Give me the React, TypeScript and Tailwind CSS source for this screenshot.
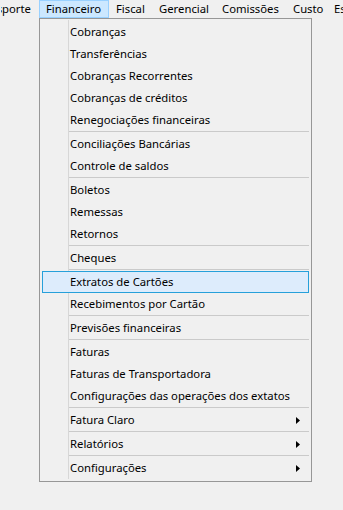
import React from 'react';

type Entry = { label: string; sub?: boolean; active?: boolean } | 'sep';

const entries: Entry[] = [
  { label: 'Cobranças' },
  { label: 'Transferências' },
  { label: 'Cobranças Recorrentes' },
  { label: 'Cobranças de créditos' },
  { label: 'Renegociações financeiras' },
  'sep',
  { label: 'Conciliações Bancárias' },
  { label: 'Controle de saldos' },
  'sep',
  { label: 'Boletos' },
  { label: 'Remessas' },
  { label: 'Retornos' },
  'sep',
  { label: 'Cheques' },
  'sep',
  { label: 'Extratos de Cartões', active: true },
  { label: 'Recebimentos por Cartão' },
  'sep',
  { label: 'Previsões financeiras' },
  'sep',
  { label: 'Faturas' },
  { label: 'Faturas de Transportadora' },
  { label: 'Configurações das operações dos extatos' },
  'sep',
  { label: 'Fatura Claro', sub: true },
  'sep',
  { label: 'Relatórios', sub: true },
  'sep',
  { label: 'Configurações', sub: true },
];

const font = { fontFamily: '"Noto Sans", "Open Sans", sans-serif' };

const App: React.FC = () => {
  return (
    <div className="relative w-[343px] h-[510px] bg-[#f0f0f0] text-[11.3px] text-black overflow-hidden" style={font}>
      {/* menu bar */}
      <div className="flex h-[18px] items-stretch whitespace-nowrap leading-[16px] overflow-hidden">
        <div className="w-[39px] shrink-0 flex justify-end overflow-hidden pr-[7px] border border-transparent">Transporte</div>
        <div className="w-[70px] shrink-0 pl-[6px] bg-[#cce8ff] border border-[#99d1ff]">Financeiro</div>
        <div className="w-[43px] shrink-0 pl-[6px] border border-transparent">Fiscal</div>
        <div className="w-[63px] shrink-0 pl-[6px] border border-transparent">Gerencial</div>
        <div className="w-[71px] shrink-0 pl-[6px] border border-transparent">Comissões</div>
        <div className="w-[41px] shrink-0 pl-[6px] border border-transparent">Custo</div>
        <div className="shrink-0 pl-[6px] border border-transparent">Estoque</div>
      </div>

      {/* dropdown */}
      <div className="absolute left-[39px] top-[18px] w-[273px] border border-[#979797] bg-[#f0f0f0] p-[2px]">
        <div className="relative flex flex-col">
          <div className="absolute left-[26px] top-[-1px] bottom-[0px] w-px bg-[#d7d7d7]" />
          {entries.map((e, i) =>
            e === 'sep' ? (
              <div key={i} className="h-[2px] pl-[27px]">
                <div className="h-px bg-[#cacaca]" />
              </div>
            ) : (
              <div
                key={i}
                className={`relative h-[22px] flex items-center pl-[27px] pr-[7px] whitespace-nowrap border ${
                  e.active ? 'bg-[#ddecfc] border-[#26a0da]' : 'border-transparent'
                }`}
              >
                <span className="flex-1">{e.label}</span>
                {e.sub && (
                  <svg width="4" height="7" viewBox="0 0 4 7" className="mr-[1px]">
                    <path d="M0 0 L4 3.5 L0 7 Z" fill="#000" />
                  </svg>
                )}
              </div>
            )
          )}
        </div>
      </div>
    </div>
  );
};

export default App;
